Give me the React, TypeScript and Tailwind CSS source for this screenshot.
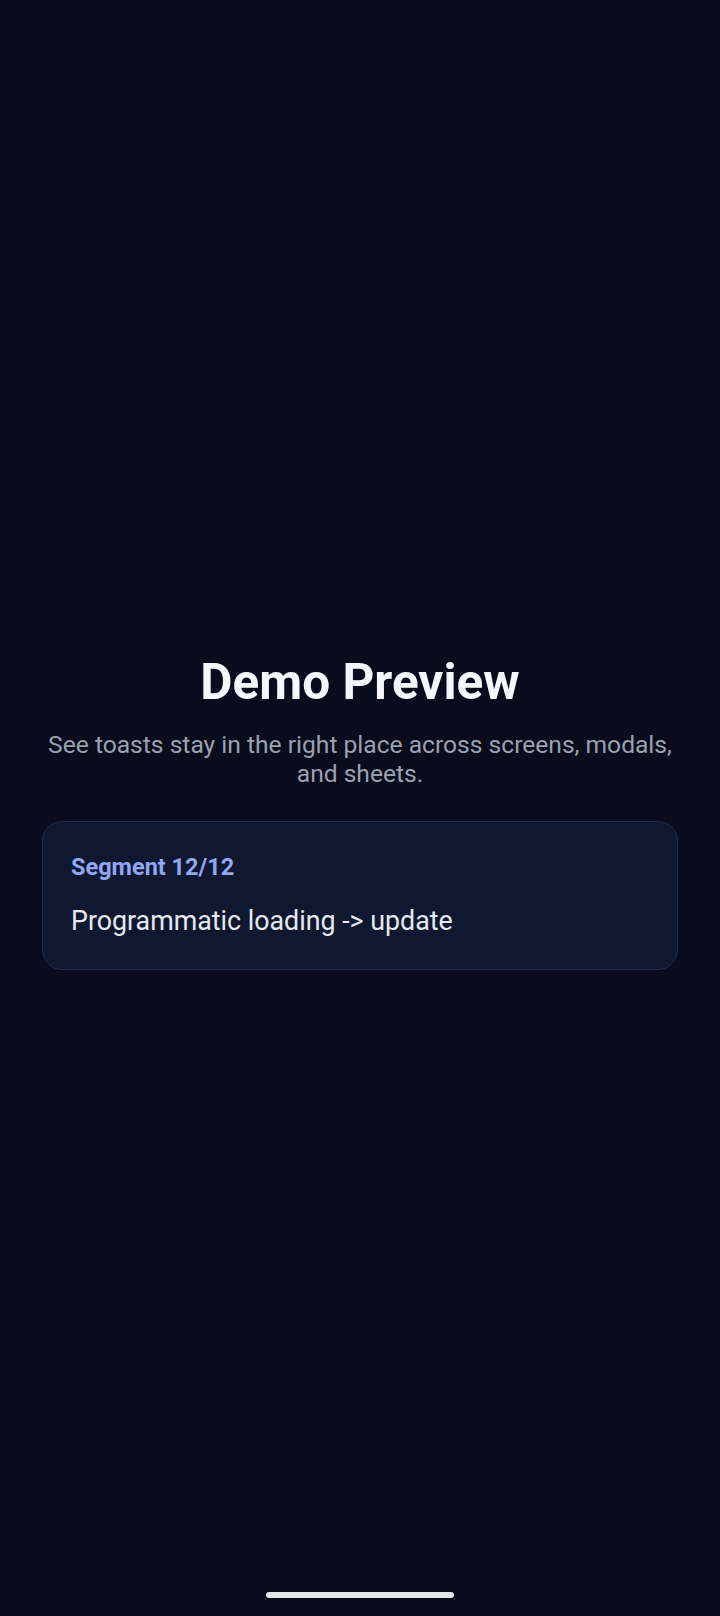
export default function App() {
  return (
    <div
      className="relative flex h-[1616px] w-full flex-col items-center justify-center bg-[#080c1c] px-[42px] pt-[6px]"
      style={{ fontFamily: 'Roboto, "Noto Sans", sans-serif' }}
    >
      <div className="flex w-full flex-col items-center">
        <h1 className="text-[49.5px] font-bold leading-[60px] text-[#f5f7fb]">Demo Preview</h1>
        <p className="mt-[18px] text-center text-[24.6px] leading-[29px] text-[#9ba1b0]">
          See toasts stay in the right place across screens, modals, and sheets.
        </p>

        <div className="mt-[33px] w-full rounded-[20px] border border-[#212c50] bg-[#10182f] px-[28px] pt-[31px] pb-[31px]">
          <div className="text-[23.5px] font-bold leading-[28px] text-[#92a7f3]">Segment 12/12</div>
          <div className="mt-[24px] text-[26.8px] leading-[33px] text-[#e6e9f0]">
            Programmatic loading -&gt; update
          </div>
        </div>
      </div>

      {/* system home indicator */}
      <div className="absolute bottom-[18px] left-1/2 h-[6px] w-[188px] -translate-x-1/2 rounded-full bg-[#e5e7eb]" />
    </div>
  )
}
